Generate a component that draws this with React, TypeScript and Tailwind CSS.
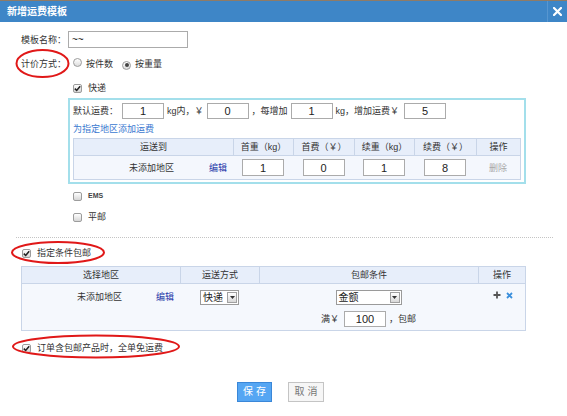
import React from "react";

const Check = ({ on }: { on?: boolean }) => (
  <span className="inline-flex shrink-0 w-[9px] h-[9px] border border-[#9c9c9c] rounded-[2px] bg-linear-to-b from-[#ffffff] to-[#d6d6d6] items-center justify-center">
    {on && (
      <svg width="7" height="7" viewBox="0 0 7 7">
        <path d="M0.8 3.6 L2.7 5.5 L6.2 1.2" stroke="#222" strokeWidth="1.5" fill="none" />
      </svg>
    )}
  </span>
);

const Radio = ({ on }: { on?: boolean }) => (
  <span className="inline-flex shrink-0 w-[9px] h-[9px] rounded-full border border-[#9c9c9c] bg-linear-to-b from-[#ffffff] to-[#dcdcdc] items-center justify-center">
    {on && <span className="w-[4px] h-[4px] rounded-full bg-[#444]" />}
  </span>
);

const Inp = ({ v, cls }: { v: string; cls: string }) => (
  <div
    className={`${cls} shrink-0 border border-[#ababab] bg-white flex items-center justify-center text-[11px] text-[#222] font-['Liberation_Sans',sans-serif]`}
  >
    {v}
  </div>
);

const Sel = ({ v, cls }: { v: string; cls: string }) => (
  <div
    className={`${cls} h-[15px] shrink-0 border border-[#9a9a9a] bg-white flex items-center justify-between pl-[2px] pr-[1px] text-[10px] text-[#222]`}
  >
    <span>{v}</span>
    <span className="w-[10px] h-[11px] border border-[#a0a0a0] bg-linear-to-b from-[#ffffff] to-[#d8d8d8] flex items-center justify-center">
      <svg width="5" height="3" viewBox="0 0 5 3">
        <path d="M0 0 L5 0 L2.5 3Z" fill="#333" />
      </svg>
    </span>
  </div>
);

export default function App() {
  return (
    <div className="w-[567px] h-[416px] bg-white relative overflow-hidden text-[9px] leading-[12px] text-[#333] font-['Liberation_Sans','Noto_Sans_CJK_SC',sans-serif]">
      {/* header */}
      <div className="h-[22px] bg-[#3e86c7] border-t border-[#8f7b66] flex items-stretch">
        <div className="flex-1 pl-[7px] flex items-center text-white font-bold text-[10px]">新增运费模板</div>
        <div className="w-[20px] border-l border-[#5796d0] flex items-center justify-center">
          <svg width="9" height="9" viewBox="0 0 9 9">
            <path d="M1 1 L8 8 M8 1 L1 8" stroke="#fff" strokeWidth="2.2" strokeLinecap="square" />
          </svg>
        </div>
      </div>

      {/* 模板名称 */}
      <div className="mt-[9px] h-[17px] flex items-center">
        <div className="w-[66px] text-right">模板名称：</div>
        <div className="ml-[2px] w-[120px] h-[17px] border border-[#ababab] bg-white flex items-center pl-[3px] text-[10px] text-[#222]">~~</div>
      </div>

      {/* 计价方式 */}
      <div className="mt-[8px] h-[16px] flex items-center">
        <div className="w-[66px] text-right">计价方式：</div>
        <span className="ml-[7px]"><Radio /></span>
        <span className="ml-[4px]">按件数</span>
        <span className="ml-[9px]"><Radio on /></span>
        <span className="ml-[4px]">按重量</span>
      </div>

      {/* 快递 */}
      <div className="mt-[8px] h-[16px] flex items-center pl-[73px]">
        <Check on />
        <span className="ml-[6px]">快递</span>
      </div>

      {/* box */}
      <div className="mt-[2px] ml-[68px] w-[458px] border-2 border-[#a3dfeb] pt-[3px] px-[3px] pb-[2px]">
        <div className="h-[16px] flex items-center">
          <span>默认运费：</span>
          <Inp v="1" cls="ml-[4px] w-[42px] h-[16px]" />
          <span className="ml-[3px]">kg内，￥</span>
          <Inp v="0" cls="ml-[3px] w-[42px] h-[16px]" />
          <span className="ml-[3px]">，每增加</span>
          <Inp v="1" cls="ml-[3px] w-[42px] h-[16px]" />
          <span className="ml-[3px]">kg，增加运费￥</span>
          <Inp v="5" cls="ml-[5px] w-[42px] h-[16px]" />
        </div>
        <div className="h-[19px] flex items-center text-[#3a78d0]">为指定地区添加运费</div>
        <div className="w-[448px] border border-[#c9d5e8]">
          <div className="h-[16px] grid grid-cols-[159px_60px_61px_60px_62px_1fr] bg-[#e7eefa] text-[#333]">
            <div className="flex items-center justify-center">运送到</div>
            <div className="flex items-center justify-center border-l border-[#c9d5e8]">首重（kg）</div>
            <div className="flex items-center justify-center border-l border-[#c9d5e8]">首费（￥）</div>
            <div className="flex items-center justify-center border-l border-[#c9d5e8]">续重（kg）</div>
            <div className="flex items-center justify-center border-l border-[#c9d5e8]">续费（￥）</div>
            <div className="flex items-center justify-center border-l border-[#c9d5e8]">操作</div>
          </div>
          <div className="h-[24px] grid grid-cols-[159px_60px_61px_60px_62px_1fr] bg-[#f4f7fd] border-t border-[#c9d5e8]">
            <div className="flex items-center pl-[55px]">
              <span>未添加地区</span>
              <span className="ml-[35px] text-[#2236a8]">编辑</span>
            </div>
            <div className="flex items-center justify-center"><Inp v="1" cls="w-[42px] h-[17px]" /></div>
            <div className="flex items-center justify-center"><Inp v="0" cls="w-[42px] h-[17px]" /></div>
            <div className="flex items-center justify-center"><Inp v="1" cls="w-[42px] h-[17px]" /></div>
            <div className="flex items-center justify-center"><Inp v="8" cls="w-[42px] h-[17px]" /></div>
            <div className="flex items-center justify-center text-[#a8a8a8]">删除</div>
          </div>
        </div>
      </div>

      {/* EMS */}
      <div className="mt-[4px] h-[16px] flex items-center pl-[73px]">
        <Check />
        <span className="ml-[6px] text-[7px] font-bold text-[#444]">EMS</span>
      </div>
      {/* 平邮 */}
      <div className="mt-[5px] h-[16px] flex items-center pl-[73px]">
        <Check />
        <span className="ml-[6px]">平邮</span>
      </div>

      {/* dashed */}
      <div className="mt-[12px] ml-[16px] w-[537px] border-t border-dotted border-[#c4c4c4]" />

      {/* 指定条件包邮 */}
      <div className="mt-[7px] h-[16px] flex items-center pl-[22px]">
        <Check on />
        <span className="ml-[6px]">指定条件包邮</span>
      </div>

      {/* table 2 */}
      <div className="mt-[5px] ml-[21px] w-[505px] border border-[#c9d5e8]">
        <div className="h-[16px] grid grid-cols-[158px_79px_219px_1fr] bg-[#e7eefa]">
          <div className="flex items-center justify-center">选择地区</div>
          <div className="flex items-center justify-center border-l border-[#c9d5e8]">运送方式</div>
          <div className="flex items-center justify-center border-l border-[#c9d5e8]">包邮条件</div>
          <div className="flex items-center justify-center border-l border-[#c9d5e8]">操作</div>
        </div>
        <div className="h-[47px] grid grid-cols-[158px_79px_219px_1fr] bg-[#f5f8fd] border-t border-[#c9d5e8]">
          <div className="flex items-start pt-[6px] pl-[55px] leading-[14px]">
            <span>未添加地区</span>
            <span className="ml-[34px] text-[#2236a8]">编辑</span>
          </div>
          <div className="flex justify-center pt-[6px]">
            <Sel v="快递" cls="w-[39px]" />
          </div>
          <div className="flex flex-col items-center pt-[6px]">
            <Sel v="金额" cls="w-[66px]" />
            <div className="mt-[6px] h-[16px] flex items-center">
              <span>满￥</span>
              <Inp v="100" cls="ml-[5px] w-[42px] h-[16px]" />
              <span className="ml-[3px]">，包邮</span>
            </div>
          </div>
          <div className="flex justify-center items-start pt-[6px]">
            <div className="h-[10px] flex items-center gap-[5px] pl-[2px]">
              <svg width="8" height="8" viewBox="0 0 8 8">
                <path d="M4 0.5 V7.5 M0.5 4 H7.5" stroke="#555" strokeWidth="1.8" />
              </svg>
              <svg width="7" height="7" viewBox="0 0 7 7">
                <path d="M1 1 L6 6 M6 1 L1 6" stroke="#3a8fdc" strokeWidth="1.8" />
              </svg>
            </div>
          </div>
        </div>
      </div>

      {/* 订单 */}
      <div className="mt-[9px] h-[16px] flex items-center pl-[22px]">
        <Check on />
        <span className="ml-[6px]">订单含包邮产品时，全单免运费</span>
      </div>

      {/* buttons */}
      <div className="mt-[26px] flex pl-[237px] gap-[16px]">
        <div className="w-[35px] h-[20px] bg-[#55a6f3] border border-[#3a87d8] text-white text-[10px] tracking-[3px] pl-[3px] flex items-center justify-center">保存</div>
        <div className="w-[36px] h-[20px] bg-[#f6f6f6] border border-[#c4c4c4] text-[#777] text-[10px] tracking-[3px] pl-[3px] flex items-center justify-center">取消</div>
      </div>

      {/* red ellipses */}
      <svg className="absolute left-0 top-0 pointer-events-none" width="567" height="416" viewBox="0 0 567 416">
        <ellipse cx="42.5" cy="63.5" rx="26" ry="13.5" stroke="#e01818" strokeWidth="2" fill="none" />
        <ellipse cx="58" cy="252.5" rx="46" ry="10.5" stroke="#e01818" strokeWidth="2" fill="none" />
        <ellipse cx="96" cy="346.5" rx="83" ry="11" stroke="#e01818" strokeWidth="2" fill="none" />
      </svg>
    </div>
  );
}
